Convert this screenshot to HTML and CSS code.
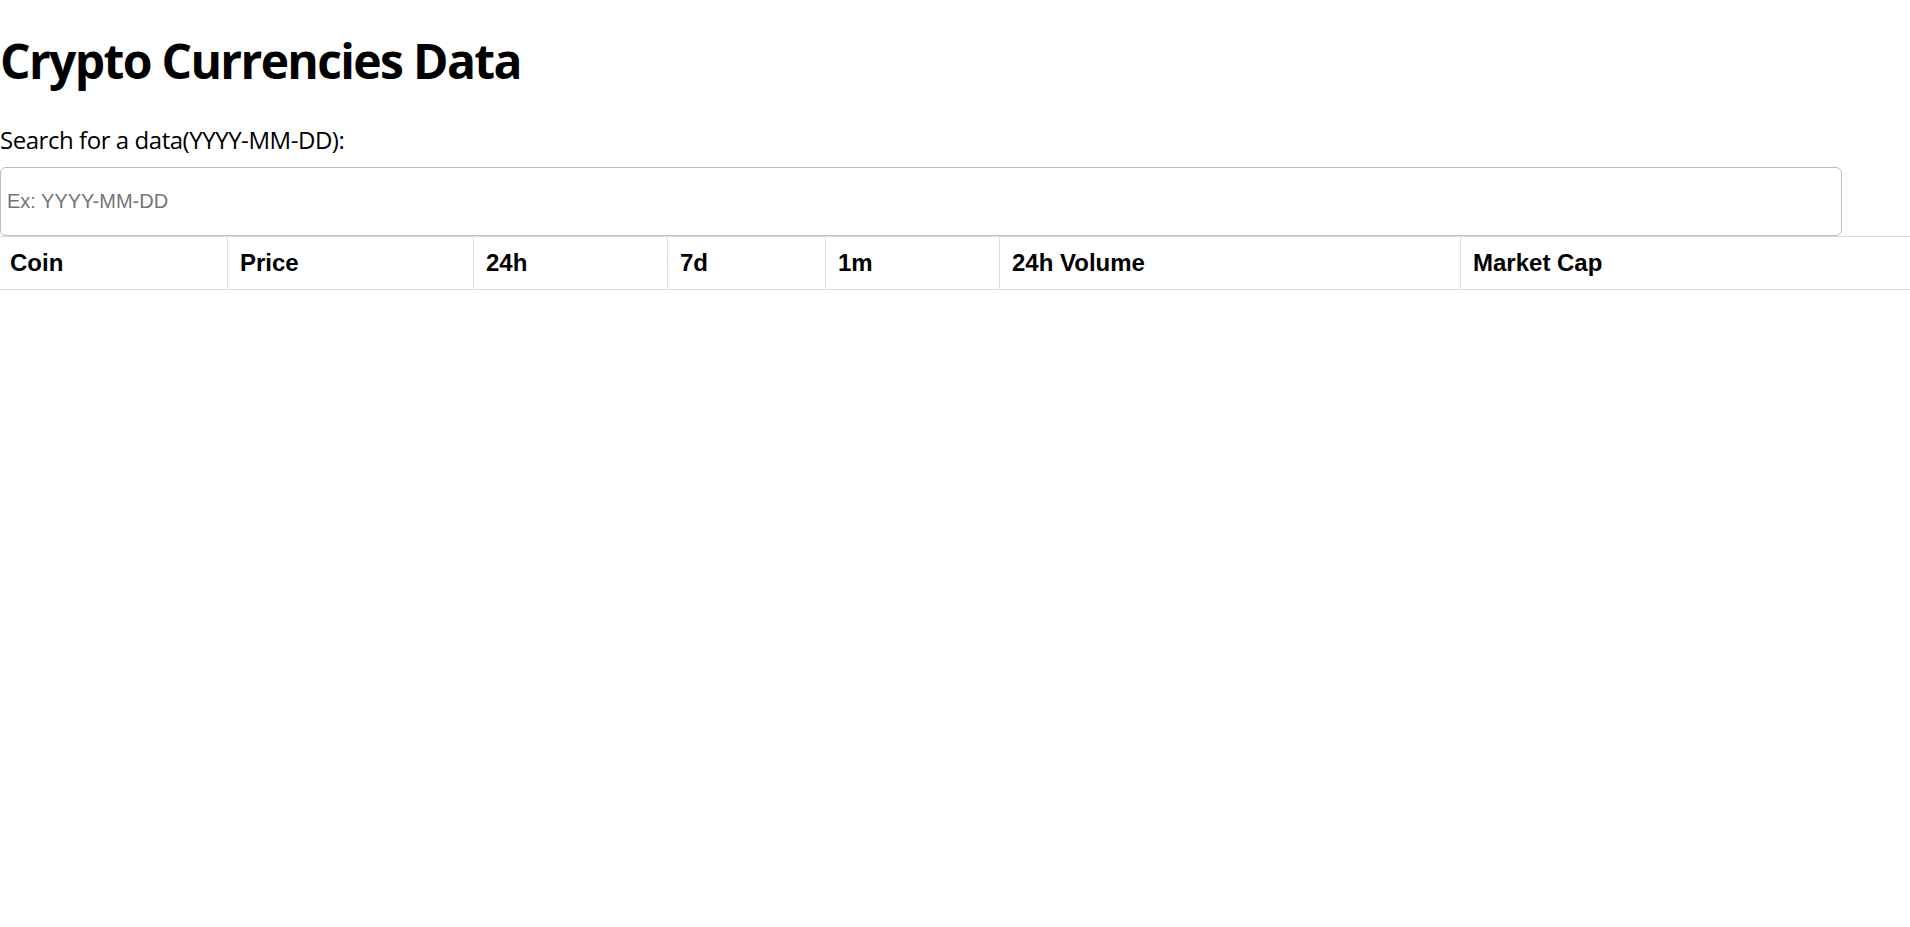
FILE: index.html
```html
<!DOCTYPE html>
<html lang="en">
<head>
<meta charset="utf-8">
<title>Crypto Currencies Data</title>
<link rel="stylesheet" href="styles.css">
</head>
<body>
<h1 class="title">Crypto Currencies Data</h1>
<label class="search-label" for="date">Search for a data(YYYY-MM-DD):</label>
<input class="search-input" id="date" type="text" placeholder="Ex: YYYY-MM-DD">
<table class="coins">
  <colgroup>
    <col class="c-coin"><col class="c-price"><col class="c-24h"><col class="c-7d"><col class="c-1m"><col class="c-vol"><col class="c-cap">
  </colgroup>
  <thead>
    <tr>
      <th>Coin</th><th>Price</th><th>24h</th><th>7d</th><th>1m</th><th>24h Volume</th><th>Market Cap</th>
    </tr>
  </thead>
  <tbody></tbody>
</table>
</body>
</html>
```
FILE: styles.css
```css
html, body {
  margin: 0;
  padding: 0;
  background: #fff;
  color: #000;
  font-family: "Open Sans", "Noto Sans", sans-serif;
}

.title {
  margin: 29px 0 0 0;
  font-size: 48px;
  line-height: 64px;
  font-weight: 700;
  letter-spacing: -1.65px;
}

.search-label {
  display: block;
  margin-top: 31px;
  font-size: 24px;
  line-height: 32px;
  letter-spacing: -0.45px;
}

.search-input {
  display: block;
  box-sizing: border-box;
  margin: 11px 0 0 0;
  width: 1842px;
  height: 69px;
  padding: 0 6px;
  border: 1px solid #bdbdbd;
  border-radius: 6px;
  font-family: "Liberation Sans", Arial, sans-serif;
  font-size: 20px;
  color: #000;
  outline: none;
}

.search-input::placeholder {
  color: #757575;
}

.coins {
  width: 1910px;
  table-layout: fixed;
  border-collapse: separate;
  border-spacing: 0;
  font-family: "Liberation Sans", Arial, sans-serif;
}

.c-coin { width: 227px; }
.c-price { width: 246px; }
.c-24h { width: 194px; }
.c-7d { width: 158px; }
.c-1m { width: 174px; }
.c-vol { width: 461px; }
.c-cap { width: 450px; }

.coins th {
  text-align: left;
  font-size: 24px;
  font-weight: 700;
  line-height: 52px;
  padding: 0 12px;
  border-top: 1px solid #dcdcdc;
  border-bottom: 1px solid #dcdcdc;
  border-left: 1px solid #dcdcdc;
  white-space: nowrap;
}

.coins th:first-child {
  border-left: none;
  padding-left: 10px;
}
```
